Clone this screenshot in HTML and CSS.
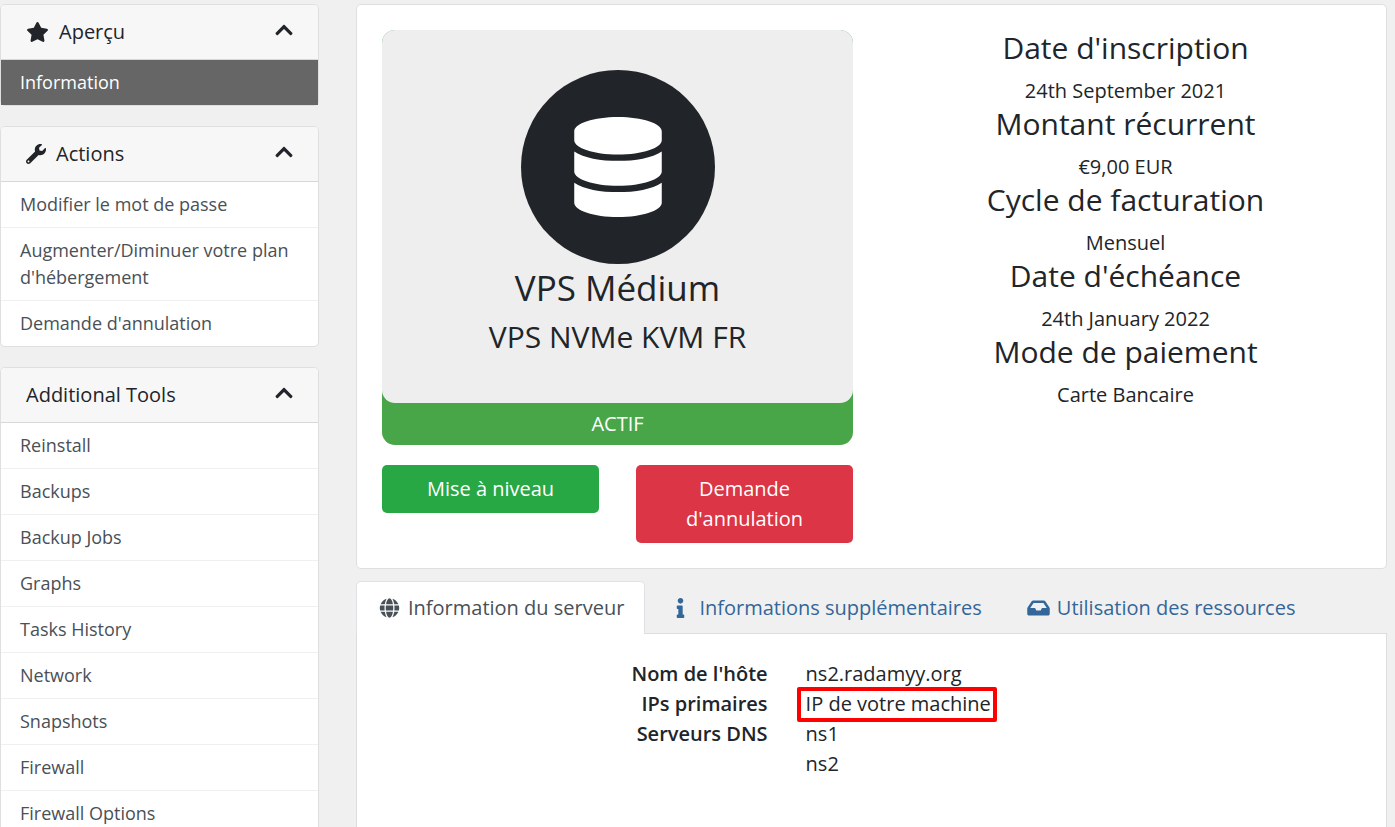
FILE: index.html
```html
<!DOCTYPE html>
<html lang="fr">
<head>
<meta charset="utf-8">
<meta name="viewport" content="width=device-width, initial-scale=1">
<title>VPS Médium</title>
<link rel="stylesheet" href="styles.css">
</head>
<body>
<svg class="sprite" aria-hidden="true">
  <symbol id="i-star" viewBox="0 0 576 512"><path d="M259.3 17.8L194 150.2 47.9 171.5c-26.2 3.8-36.7 36.1-17.7 54.6l105.7 103-25 145.5c-4.5 26.3 23.2 46 46.4 33.7L288 439.6l130.7 68.7c23.2 12.2 50.9-7.4 46.4-33.7l-25-145.5 105.7-103c19-18.5 8.5-50.8-17.7-54.6L382 150.2 316.7 17.8c-11.7-23.6-45.6-23.9-57.4 0z"/></symbol>
  <symbol id="i-wrench" viewBox="0 0 512 512"><path d="M507.73 109.1c-2.24-9.03-13.54-12.09-20.12-5.51l-74.36 74.36-67.88-11.31-11.31-67.88 74.36-74.36c6.62-6.62 3.43-17.9-5.66-20.16-47.38-11.74-99.55.91-136.58 37.93-39.64 39.64-50.55 97.1-34.05 147.2L18.74 402.76c-24.99 24.99-24.99 65.51 0 90.5 24.99 24.99 65.51 24.99 90.5 0l213.21-213.21c50.12 16.71 107.47 5.68 147.37-34.22 37.07-37.07 49.7-89.32 37.91-136.73zM64 472c-13.25 0-24-10.75-24-24 0-13.26 10.75-24 24-24s24 10.74 24 24c0 13.25-10.75 24-24 24z"/></symbol>
  <symbol id="i-up" viewBox="0 0 448 512"><path d="M240.971 130.524l194.343 194.343c9.373 9.373 9.373 24.569 0 33.941l-22.667 22.667c-9.357 9.357-24.522 9.375-33.901.04L224 227.495 69.255 381.516c-9.379 9.335-24.544 9.317-33.901-.04l-22.667-22.667c-9.373-9.373-9.373-24.569 0-33.941L207.03 130.525c9.372-9.373 24.568-9.373 33.941-.001z"/></symbol>
  <symbol id="i-globe" viewBox="0 0 496 512"><path d="M336.5 160C322 70.7 287.8 8 248 8s-74 62.7-88.5 152h177zM152 256c0 22.2 1.2 43.5 3.3 64h185.3c2.1-20.5 3.3-41.8 3.3-64s-1.2-43.5-3.3-64H155.3c-2.1 20.5-3.3 41.8-3.3 64zm324.7-96c-28.6-67.9-86.5-120.4-158-141.6 24.4 33.8 41.2 84.7 50 141.6h108zM177.2 18.4C105.8 39.6 47.8 92.1 19.3 160h108c8.7-56.9 25.5-107.8 49.9-141.6zM487.4 192H372.7c2.1 21 3.3 42.5 3.3 64s-1.2 43-3.3 64h114.6c5.5-20.5 8.6-41.8 8.6-64s-3.1-43.5-8.5-64zM120 256c0-21.5 1.2-43 3.3-64H8.6C3.2 212.5 0 233.8 0 256s3.2 43.5 8.6 64h114.6c-2-21-3.2-42.5-3.2-64zm39.5 96c14.5 89.3 48.7 152 88.5 152s74-62.7 88.5-152h-177zm159.3 141.6c71.4-21.2 129.4-73.7 158-141.6h-108c-8.8 56.9-25.6 107.8-50 141.6zM19.3 352c28.6 67.9 86.5 120.4 158 141.6-24.4-33.8-41.2-84.7-50-141.6h-108z"/></symbol>
  <symbol id="i-info" viewBox="0 0 192 512"><path d="M20 424.229h20V279.771H20c-11.046 0-20-8.954-20-20V212c0-11.046 8.954-20 20-20h112c11.046 0 20 8.954 20 20v212.229h20c11.046 0 20 8.954 20 20V492c0 11.046-8.954 20-20 20H20c-11.046 0-20-8.954-20-20v-47.771c0-11.046 8.954-20 20-20zM96 0C56.235 0 24 32.235 24 72s32.235 72 72 72 72-32.235 72-72S135.764 0 96 0z"/></symbol>
  <symbol id="i-inbox" viewBox="0 0 576 512"><path d="M567.938 243.908L462.25 85.374A48.003 48.003 0 0 0 422.311 64H153.689a48 48 0 0 0-39.938 21.374L8.062 243.908A47.994 47.994 0 0 0 0 270.533V400c0 26.51 21.49 48 48 48h480c26.51 0 48-21.49 48-48V270.533a47.994 47.994 0 0 0-8.062-26.625zM162.252 128h251.497l85.333 128H376l-32 64H232l-32-64H76.918l85.334-128z"/></symbol>
</svg>

<div class="page">
  <aside class="sidebar">
    <section class="card">
      <header class="card-head">
        <svg class="icon-wide" aria-hidden="true"><use href="#i-star"/></svg>
        <h2 class="card-title">Aperçu</h2>
        <button class="toggle" type="button" aria-label="Réduire Aperçu"><svg class="chevron" aria-hidden="true"><use href="#i-up"/></svg></button>
      </header>
      <nav class="menu"><a class="menu-item active" href="#information">Information</a></nav>
    </section>
    <section class="card">
      <header class="card-head">
        <svg class="icon" aria-hidden="true"><use href="#i-wrench"/></svg>
        <h2 class="card-title">Actions</h2>
        <button class="toggle" type="button" aria-label="Réduire Actions"><svg class="chevron" aria-hidden="true"><use href="#i-up"/></svg></button>
      </header>
      <nav class="menu">
        <a class="menu-item" href="#password">Modifier le mot de passe</a>
        <a class="menu-item" href="#upgrade">Augmenter/Diminuer votre plan d'hébergement</a>
        <a class="menu-item" href="#cancel">Demande d'annulation</a>
      </nav>
    </section>
    <section class="card">
      <header class="card-head">
        <h2 class="card-title">Additional Tools</h2>
        <button class="toggle" type="button" aria-label="Réduire Additional Tools"><svg class="chevron" aria-hidden="true"><use href="#i-up"/></svg></button>
      </header>
      <nav class="menu">
        <a class="menu-item" href="#reinstall">Reinstall</a>
        <a class="menu-item" href="#backups">Backups</a>
        <a class="menu-item" href="#backup-jobs">Backup Jobs</a>
        <a class="menu-item" href="#graphs">Graphs</a>
        <a class="menu-item" href="#tasks">Tasks History</a>
        <a class="menu-item" href="#network">Network</a>
        <a class="menu-item" href="#snapshots">Snapshots</a>
        <a class="menu-item" href="#firewall">Firewall</a>
        <a class="menu-item" href="#firewall-options">Firewall Options</a>
      </nav>
    </section>
  </aside>

  <main class="main">
    <section class="card overview" id="information">
      <div class="product-col">
        <div class="product">
          <div class="product-body">
            <svg class="product-icon" viewBox="0 0 200 200" aria-hidden="true">
              <circle class="disc" cx="100" cy="100" r="97"/>
              <svg x="56" y="50" width="88" height="100" viewBox="0 0 448 512"><path class="drum" d="M448 73.143v45.714C448 159.143 347.667 192 224 192S0 159.143 0 118.857V73.143C0 32.857 100.333 0 224 0s224 32.857 224 73.143zM448 176v102.857C448 319.143 347.667 352 224 352S0 319.143 0 278.857V176c48.125 33.143 136.208 48.572 224 48.572S399.874 209.143 448 176zm0 160v102.857C448 479.143 347.667 512 224 512S0 479.143 0 438.857V336c48.125 33.143 136.208 48.572 224 48.572S399.874 369.143 448 336z"/></svg>
            </svg>
            <h1 class="product-name">VPS Médium</h1>
            <p class="heading">VPS NVMe KVM FR</p>
          </div>
          <div class="product-status">ACTIF</div>
        </div>
        <div class="actions">
          <button class="btn btn-success" type="button">Mise à niveau</button>
          <button class="btn btn-danger" type="button">Demande d'annulation</button>
        </div>
      </div>
      <div class="billing">
        <h2 class="heading">Date d'inscription</h2><p>24th September 2021</p>
        <h2 class="heading">Montant récurrent</h2><p>€9,00 EUR</p>
        <h2 class="heading">Cycle de facturation</h2><p>Mensuel</p>
        <h2 class="heading">Date d'échéance</h2><p>24th January 2022</p>
        <h2 class="heading">Mode de paiement</h2><p>Carte Bancaire</p>
      </div>
    </section>

    <nav class="tabs">
      <a class="tab selected" href="#server"><svg class="tab-icon" aria-hidden="true"><use href="#i-globe"/></svg>Information du serveur</a>
      <a class="tab" href="#more"><svg class="tab-icon" aria-hidden="true"><use href="#i-info"/></svg>Informations supplémentaires</a>
      <a class="tab" href="#usage"><svg class="tab-icon" aria-hidden="true"><use href="#i-inbox"/></svg>Utilisation des ressources</a>
    </nav>
    <section class="pane" id="server">
      <dl class="details">
        <dt>Nom de l'hôte</dt><dd>ns2.radamyy.org</dd>
        <dt>IPs primaires</dt><dd><span class="marked">IP de votre machine</span></dd>
        <dt>Serveurs DNS</dt><dd>ns1<br>ns2</dd>
      </dl>
    </section>
  </main>
</div>
</body>
</html>
```
FILE: styles.css
```css
* { box-sizing: border-box; }

body {
  margin: 0;
  background: #f0f0f0;
  color: #212529;
  font-family: "Open Sans", "Noto Sans", sans-serif;
  font-size: 20px;
  line-height: 30px;
}

h1, h2, p, dl, dd { margin: 0; font-weight: 400; }
a { text-decoration: none; }
button { font: inherit; border: 0; cursor: pointer; }
svg { display: block; flex: none; fill: currentColor; }

.sprite { display: none; }

.page {
  display: grid;
  grid-template-columns: minmax(0, 319fr) minmax(0, 1031fr);
  gap: 37px;
  padding: 4px 8px 0 0;
}

.card {
  background: #fff;
  border: 1px solid #dfdfdf;
  border-radius: 5px;
}

/* Sidebar */
.sidebar { display: flex; flex-direction: column; gap: 20px; }

.card-head {
  display: flex;
  align-items: center;
  gap: 10px;
  padding: 15px 25px;
  background: #f7f7f7;
  border-bottom: 1px solid #d8d8d8;
  border-radius: 4px 4px 0 0;
}
.card-title { flex: 1; font-size: 20px; line-height: 24px; }
.icon { width: 20px; height: 20px; }
.icon-wide { width: 23px; height: 20px; }
.toggle { align-self: flex-start; padding: 0; background: none; color: inherit; }
.chevron { width: 18px; height: 20px; }

.menu-item {
  display: block;
  padding: 9px 19px;
  color: #495057;
  font-size: 18px;
  line-height: 27px;
}
.menu-item + .menu-item { border-top: 1px solid #f0f0f0; }
.menu-item.active { background: #666; color: #fff; }

/* Main column */
.main { display: flex; flex-direction: column; }

.overview {
  display: grid;
  grid-template-columns: repeat(2, minmax(0, 1fr));
  gap: 37px;
  padding: 25px;
}

.product {
  background: #48a648;
  border-radius: 13px;
  text-align: center;
}
.product-body {
  display: flex;
  flex-direction: column;
  align-items: center;
  padding: 37px 20px 38px;
  background: #eee;
  border-radius: 13px;
}
.product-icon { width: 200px; height: 200px; }
.disc { fill: #212529; }
.drum { fill: #fff; }
.product-name { margin-bottom: 10px; font-size: 35px; line-height: 42px; }
.heading { margin-bottom: 10px; font-size: 30px; line-height: 36px; }
.product-status { padding: 6px; color: #fff; }

.actions {
  display: grid;
  grid-template-columns: repeat(2, minmax(0, 1fr));
  align-items: start;
  gap: 37px;
  margin-top: 20px;
}
.btn { padding: 9px 16px; border-radius: 5px; color: #fff; }
.btn-success { background: #28a745; }
.btn-danger { background: #dc3545; }

.billing { text-align: center; }

/* Tabs */
.tabs {
  display: flex;
  gap: 2px;
  margin-top: 12px;
}
.tab {
  display: flex;
  align-items: center;
  gap: 6px;
  padding: 11px 20px 10px;
  border: 1px solid transparent;
  border-bottom: 0;
  border-radius: 5px 5px 0 0;
  color: #369;
}
.tab.selected {
  margin-bottom: -1px;
  padding-bottom: 11px;
  background: #fff;
  border-color: #dee2e6;
  color: #495057;
  z-index: 1;
}
.tab-icon { width: 25px; height: 20px; }

.pane {
  flex: 1;
  padding: 25px;
  background: #fff;
  border: 1px solid #ddd;
}
.details {
  display: grid;
  grid-template-columns: minmax(0, 386fr) minmax(0, 556fr);
  column-gap: 38px;
}
.details dt { font-weight: 600; text-align: right; }

.marked { position: relative; }
.marked::after {
  content: "";
  position: absolute;
  inset: -3px -6px -5px -9px;
  border: 4px solid #f00;
  border-radius: 2px;
}
```
